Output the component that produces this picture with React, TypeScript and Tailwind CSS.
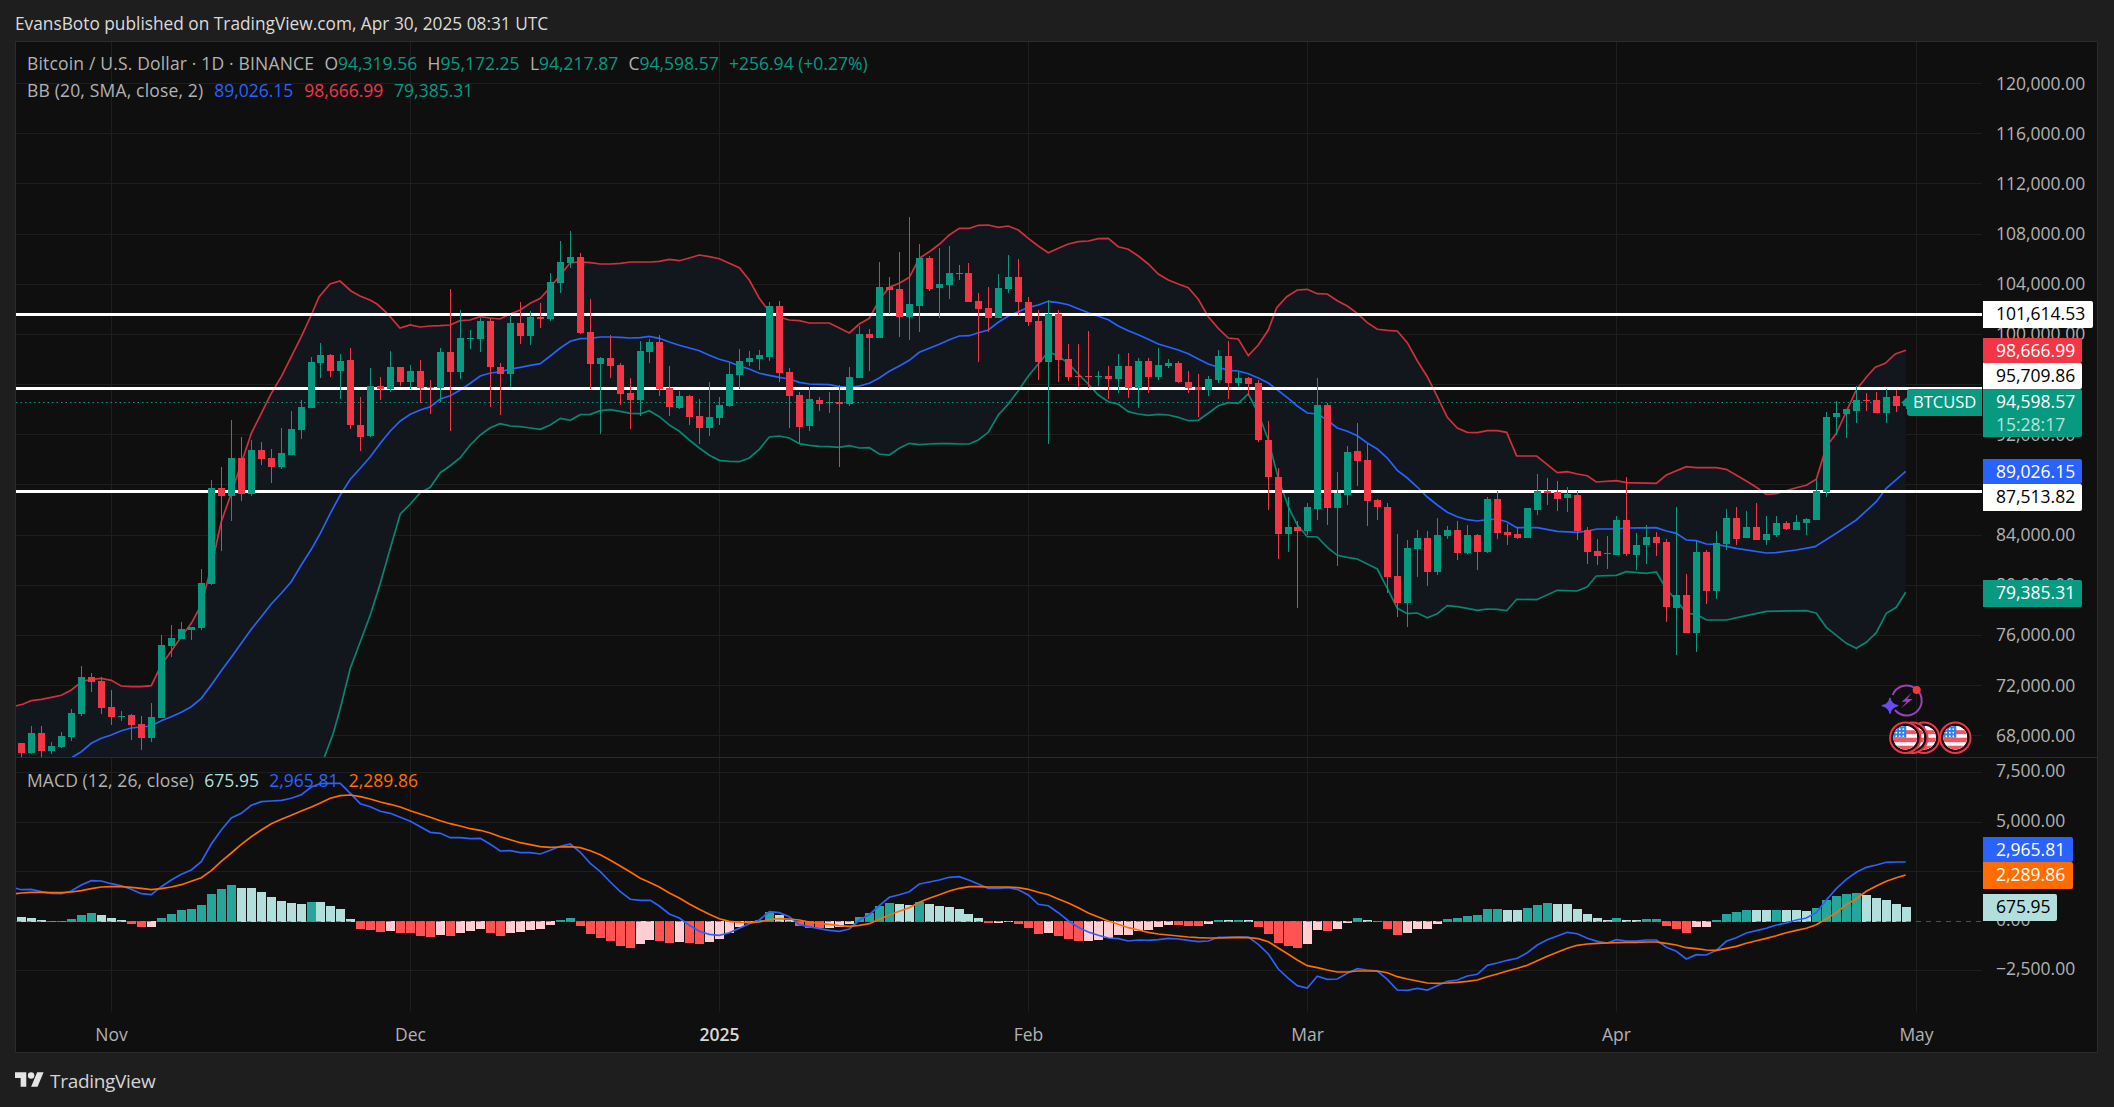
import React from "react";

type Pt = [number, number];
// hi, body top, body bottom, lo, 1 = up candle
type Row = [number, number, number, number, number];

const SKIPS = [31, 64, 96, 129, 161];
const barX = (i: number) => 21.5 + 10 * (i - 1) - SKIPS.filter((s) => s <= i).length;

// values read off 3x crops, so everything gets divided by 3 and shifted back
const crop = (ox: number, oy: number, flat: number[], s = 3): Pt[] => {
  const out: Pt[] = [];
  for (let i = 0; i < flat.length; i += 2) out.push([ox + flat[i] / s, oy + flat[i + 1] / s]);
  return out;
};
const line = (pts: Pt[]) => pts.map((p) => `${p[0].toFixed(1)},${p[1].toFixed(1)}`).join(" ");

const CANDLES_A: Row[] = [
  [1330,1330,1358,1370,0],[1278,1300,1358,1362,1],[1278,1300,1352,1370,0],[1326,1338,1352,1362,1],[1296,1308,1340,1343,1],
  [1228,1240,1310,1322,1],[1098,1132,1242,1247,1],[1120,1132,1145,1175,0],[1132,1144,1223,1242,0],[1170,1221,1250,1274,0],
  [1234,1248,1250,1262,1],[1243,1246,1274,1320,0],[1248,1273,1313,1350,0],[1210,1252,1313,1326,1],[1006,1036,1253,1253,1],
  [976,1015,1037,1070,1],[966,988,1017,1017,1],[980,982,990,1020,1],[808,850,984,990,1],[540,565,852,855,1],
  [502,565,587,752,0],[360,475,587,662,1],[412,475,581,602,0],[420,451,581,587,1],[427,451,476,495,0],
  [447,475,500,549,0],[384,460,500,506,1],[333,388,464,464,1],[300,322,389,416,1],[171,187,323,323,1],
  [129,166,188,234,1],[162,166,212,231,0],[162,184,212,297,1],[144,181,375,387,0],[291,376,411,453,0],
  [205,259,408,411,1],[231,259,266,300,0],[153,202,266,275,1],[201,202,245,258,0],[195,214,245,266,1],
  [180,214,264,310,0],[240,262,264,342,0],[144,157,264,305,1],[-33,157,215,393,0],[30,115,215,237,1],
  [90,114,117,147,1],[55,63,117,156,1],[55,63,201,320,0],[189,201,222,345,0],
];
const CANDLES_B: Row[] = [
  [345,369,522,561,1],[306,369,408,432,0],[333,351,408,435,1],[309,351,357,384,0],[220,246,357,363,1],
  [123,186,249,279,1],[93,171,190,204,1],[159,171,400,403,0],[297,396,492,567,0],[471,474,492,702,1],
  [405,474,498,534,0],[490,495,582,615,0],[534,579,600,687,0],[423,453,600,648,1],[418,426,456,489,1],
  [405,426,567,588,0],[498,564,621,648,0],[573,588,624,627,1],[585,588,651,675,0],[597,648,684,732,0],
  [546,651,684,708,1],[591,615,654,675,1],[489,522,618,621,1],[447,483,525,567,1],[453,474,486,498,1],
  [450,465,477,510,1],[306,318,471,483,1],[303,318,519,546,0],[504,516,588,684,0],[576,585,681,729,0],
  [561,597,678,693,1],[591,600,612,633,0],[576,606,608,639,1],[555,606,611,801,0],[501,531,612,618,1],
  [378,402,534,534,1],[387,402,414,513,0],[186,261,414,414,1],[231,261,270,342,0],[156,267,351,411,0],
  [51,312,351,420,1],[132,174,318,396,1],[168,174,267,273,0],[144,252,264,354,1],[138,219,255,297,1],
  [195,219,221,240,0],[189,219,306,306,0],[279,303,327,486,0],[261,324,354,396,0],[222,264,354,354,1],
];
const CANDLES_C: Row[] = [
  [165,231,267,279,1],[177,231,306,345,0],[291,306,366,378,0],[330,363,486,540,0],[300,342,486,732,1],
  [330,342,480,546,0],[432,477,531,543,0],[432,528,531,561,0],[393,528,531,564,0],[513,528,531,558,1],
  [498,528,537,597,0],[462,498,537,579,1],[459,498,564,594,0],[474,483,564,624,1],[474,483,531,579,0],
  [444,495,531,540,1],[477,489,498,504,1],[483,489,546,549,0],[513,546,564,579,0],[522,561,569,651,0],
  [528,537,570,588,1],[450,468,540,549,1],[423,468,549,597,0],[516,534,549,561,1],[531,534,552,585,0],
  [540,549,720,726,0],[663,720,831,930,0],[804,831,1002,1077,0],[891,981,1002,1056,1],[963,981,993,1224,0],
  [909,921,993,1005,1],[534,615,927,960,1],[609,615,924,975,0],[816,879,924,1098,1],[738,756,885,915,1],
  [669,753,783,858,0],[732,780,903,978,0],[897,900,921,960,0],[909,921,1131,1180,0],[1002,1128,1209,1251,0],
  [1020,1044,1209,1281,1],[990,1014,1047,1131,1],[993,1014,1116,1158,0],[954,1005,1116,1125,1],[978,990,1008,1017,1],
  [963,990,1059,1080,0],[975,1005,1059,1062,1],[1002,1005,1056,1110,0],[891,897,1056,1059,1],[873,897,999,1017,0],
];
const CANDLES_D: Row[] = [
  [432,456,465,495,0],[441,462,474,477,0],[384,384,474,474,1],[282,333,390,405,1],[294,333,339,375,0],
  [303,336,357,393,0],[321,342,354,396,1],[333,345,453,480,0],[441,450,516,552,0],[477,513,528,555,0],
  [468,519,522,567,1],[408,420,525,525,1],[291,420,522,528,0],[459,495,525,570,1],[435,471,495,552,1],
  [456,471,489,528,0],[477,486,681,726,0],[381,645,684,825,1],[582,645,759,759,0],[483,516,759,816,1],
  [510,516,633,672,0],[453,489,633,657,1],[387,414,492,510,1],[381,414,477,495,0],[393,441,474,474,1],
  [369,441,480,480,0],[408,462,480,495,1],[408,429,465,471,1],[423,429,447,450,0],[405,426,450,450,1],
  [414,417,429,465,1],[297,333,420,420,1],[96,111,336,351,1],[63,99,111,165,1],[87,87,102,174,1],
  [18,60,93,129,1],[39,60,63,93,0],[36,60,99,99,0],[27,51,99,129,1],[30,48,78,96,0],[58,66,78,86,1],
];

const toReal = (rows: Row[], oy: number) =>
  rows.map((r) => [oy + r[0] / 3, oy + r[1] / 3, oy + r[2] / 3, oy + r[3] / 3, r[4]] as Row);
const CANDLES: Row[] = [
  ...toReal(CANDLES_A, 300),
  ...toReal(CANDLES_B, 200),
  ...toReal(CANDLES_C, 200),
  ...toReal(CANDLES_D, 380),
];

const UPPER: Pt[] = [
  ...crop(0, 300, [47,1218,70,1212,94,1202,124,1198,154,1192,184,1186,214,1170,244,1146,274,1138,304,1135,334,1141,364,1158,394,1160,424,1160,454,1157,484,1095,514,1053,544,1010,574,970,604,915,634,800,664,665,694,580,724,490,754,400,784,340,814,280,844,230,874,170,904,110,934,45]),
  ...crop(0, 0, [319,297,330,284,340,281,351,291,360,296,370,300,377,304,387,313,400,328,410,325,420,327,430,326,440,325.7,450,325,460,320.7,470,320,480,316.7,490,318,500,319], 1),
  ...crop(500, 200, [31,342,61,330,91,310,121,295,151,262,181,225,211,188,241,186,271,188,301,192,331,192,361,190,391,186,421,186,451,186,478,184,508,178,538,182,568,174,598,165,628,170,658,176,688,190,718,203,748,240,778,295,808,335,838,352,868,360,898,362,928,369,958,369,988,369,1018,384,1048,399,1078,372,1108,355,1138,300,1168,262,1198,250,1228,232,1258,175,1288,155,1318,133,1348,105,1378,85,1408,85,1435,76,1465,75,1495,82]),
  ...crop(1000, 200, [25,78,55,90,85,115,115,138,145,158,175,145,205,132,235,125,265,123,295,116,325,115,355,140,385,148,415,168,445,192,475,222,505,240,535,252,565,263,595,298,625,350,655,385,685,414,715,417,745,467,775,435,805,390,830,323,860,290,892,270,922,268,952,281,982,282,1012,302,1042,318,1072,340,1102,368,1132,388,1162,391,1192,393,1222,428,1252,482,1282,530,1312,590,1342,652,1372,684,1402,697,1432,698,1462,692,1492,692]),
  ...crop(1500, 380, [20,157,50,228,110,228,172,278,202,275,232,282,262,287,289,306,349,302,379,308,469,310,499,285,559,260,589,263,649,263,679,268,739,303,769,322,799,343,829,341,889,323,919,316,949,298,979,200,1009,160,1039,95,1069,30]),
  ...crop(1700, 280, [500,290,526,262,556,250,586,222,618,211]),
];
const MIDDLE: Pt[] = [
  ...crop(0, 300, [217,1372,244,1355,274,1330,304,1315,334,1305,364,1292,394,1284,424,1281,454,1278,484,1262,514,1250,544,1237,574,1220,604,1195,634,1155,664,1112,694,1072,724,1030,754,988,784,950,814,912,844,880,874,845,904,795,934,748,961,700,991,640,1021,585,1051,538,1081,505,1111,470,1141,430,1171,393,1201,363,1231,343,1261,330,1291,320,1321,297,1351,287,1381,270,1411,250,1441,228,1471,219,1500,216]),
  ...crop(500, 200, [31,507,61,502,91,496,121,491,151,468,181,444,211,424,241,416,271,415,301,411,331,411,361,412,391,414,421,413,448,409,478,415,508,426,538,436,568,444,598,452,628,466,658,478,688,486,718,498,748,507,778,520,808,526,838,532,868,537,898,547,928,552,958,553,988,554,1018,560,1048,562,1078,558,1108,550,1138,534,1168,514,1198,498,1228,481,1258,457,1288,445,1318,433,1348,419,1378,408,1408,407,1435,398,1465,390,1495,367]),
  ...crop(1000, 200, [25,348,55,335,85,322,115,315,145,304,175,308,205,314,235,326,265,338,295,349,325,359,355,378,385,392,415,404,445,418,475,432,505,441,535,450,565,461,595,477,625,492,655,502,685,511,715,513,745,521,775,534,805,549,835,572,865,595,892,618,922,639,952,642,982,660,1012,684,1042,694,1072,707,1102,729,1132,747,1162,774,1192,811,1222,834,1252,861,1282,891,1312,915,1342,937,1372,950,1402,959,1432,963,1462,959,1492,957]),
  ...crop(1500, 380, [20,425,50,443,82,443,112,443,172,454,232,457,262,453,292,447,349,447,379,444,469,443,499,453,529,460,559,480,589,482,619,492,649,493,709,505,799,519,829,518,889,510,945,500,1009,460,1069,420,1129,365,1159,325,1217,274]),
];
const LOWER: Pt[] = [
  ...crop(0, 300, [973,1372,1000,1300,1021,1225,1051,1105,1081,1025,1111,945,1141,850,1171,745,1201,642,1231,612,1261,578,1291,562,1321,518,1351,497,1381,473,1411,435,1441,405,1471,383,1500,371]),
  ...crop(500, 200, [31,678,61,680,91,684,121,688,151,675,181,655,211,661,241,644,271,643,301,632,331,629,361,634,391,640,421,641,448,632,478,650,508,675,538,694,568,720,598,744,628,766,658,781,688,784,718,785,748,774,778,748,808,711,838,708,868,714,898,731,928,736,958,739,988,740,1018,742,1048,737,1078,744,1108,743,1138,762,1168,765,1198,745,1228,730,1258,734,1288,732,1318,731,1348,731,1378,732,1408,732,1435,720,1465,697,1495,645]),
  ...crop(1000, 200, [25,612,55,572,85,528,115,492,145,455,175,468,205,490,235,522,265,552,295,585,325,605,355,613,385,635,415,642,445,646,475,643,505,645,535,652,565,662,595,661,625,640,655,617,685,608,715,610,745,582,775,640,805,720,835,835,865,920,892,975,922,1010,952,1011,982,1042,1012,1066,1042,1072,1072,1077,1102,1092,1132,1107,1162,1165,1192,1225,1222,1241,1252,1239,1282,1253,1312,1241,1342,1217,1372,1220,1402,1225,1432,1231,1462,1227,1492,1228]),
  ...crop(1500, 380, [20,692,50,658,110,659,172,631,232,633,262,620,289,588,349,586,379,575,439,580,469,576,499,628,529,660,559,700,589,703,619,720,679,720,739,707,799,694,919,692,949,700,979,742,1039,790,1069,805,1099,787,1129,758,1159,700,1189,682,1217,637]),
];
const BAND_FILL: Pt[] = [...UPPER, ...[...LOWER].reverse(), [318, 790], [15, 790]];

const MACD_LINE: Pt[] = [
  ...crop(0, 780, [47,325,64,329,94,328,124,335,154,340,184,341,214,333,244,315,274,302,304,303,334,311,364,317,394,328,424,341,454,344,484,320,514,300,544,283,574,270,604,245,634,192,664,150,694,114,724,100,754,76,784,65,814,63,844,61,874,55,904,44,934,21,961,11,991,10,1021,10,1051,40,1081,71,1111,80,1141,94,1171,100,1201,112,1231,124,1261,140,1291,157,1321,160,1351,173,1381,173,1411,176,1441,175,1471,193,1501,213]),
  ...crop(500, 780, [31,212,61,218,91,218,121,222,151,211,181,199,211,192,241,217,271,250,301,275,331,306,361,335,391,358,421,361,451,361,478,378,508,402,538,414,568,436,598,454,628,463,658,466,688,458,718,445,748,431,778,420,808,395,838,398,868,410,898,434,928,440,958,446,988,451,1018,454,1048,447,1078,420,1108,404,1138,377,1168,352,1198,344,1228,335,1258,312,1288,306,1318,300,1348,292,1378,290,1408,301,1435,312,1465,325,1495,325]),
  ...crop(1000, 840, [25,143,55,149,85,165,115,193,145,197,175,218,205,242,235,262,265,276,295,286,325,294,355,296,385,303,415,300,445,301,475,299,505,295,535,297,565,301,595,305,625,303,655,292,685,292,715,291,745,291,775,313,805,342,835,387,865,415,892,437,922,444,952,409,982,418,1012,417,1042,400,1072,386,1102,390,1132,393,1162,418,1192,450,1222,451,1252,445,1282,450,1312,437,1342,424,1372,420,1402,408,1432,403]),
  ...crop(1480, 840, [22,376,52,369,82,361,112,355,142,338,172,315,202,299,232,288,262,277,292,281,322,295,352,304,382,309,409,299,439,303,469,303,499,300,529,300,559,322,589,334,619,357,649,344,679,345,709,331,739,304,769,293,799,279,829,272,859,265,889,255,919,249,949,240,979,234,1009,218,1039,180,1069,146,1099,118,1129,97,1159,82,1189,75,1219,67,1249,66,1277,66]),
];
const SIGNAL_LINE: Pt[] = [
  ...crop(0, 780, [47,341,64,339,94,337,124,337,154,338,184,338,214,336,244,332,274,326,304,321,334,320,364,320,394,322,424,325,454,329,484,326,514,321,544,314,574,304,604,293,634,272,664,244,694,219,724,193,754,170,784,150,814,131,844,118,874,106,904,93,934,81,961,69,991,55,1021,47,1051,45,1081,50,1111,57,1141,66,1171,73,1201,81,1231,92,1261,102,1291,112,1321,122,1351,131,1381,138,1411,146,1441,151,1471,159,1501,170]),
  ...crop(500, 780, [31,179,61,188,91,194,121,200,151,202,181,201,211,200,241,203,271,212,301,224,331,241,361,258,391,276,421,295,451,308,478,321,508,339,538,354,568,372,598,388,628,403,658,416,688,424,718,427,748,428,778,426,808,419,838,416,868,417,898,420,928,426,958,430,988,433,1018,437,1048,439,1078,436,1108,431,1138,418,1168,405,1198,394,1228,383,1258,367,1288,355,1318,344,1348,333,1378,325,1408,320,1435,320,1465,321,1495,321]),
  ...crop(1000, 840, [25,141,55,143,85,148,115,157,145,164,175,177,205,189,235,203,265,219,295,231,325,243,355,253,385,263,415,270,445,277,475,282,505,285,535,288,565,291,595,293,625,294,655,294,685,293,715,292,745,293,775,296,805,305,835,324,865,343,892,360,922,377,952,383,982,390,1012,396,1042,396,1072,393,1102,393,1132,393,1162,398,1192,410,1222,417,1252,423,1282,429,1312,430,1342,429,1372,427,1402,424,1432,420]),
  ...crop(1480, 840, [22,410,52,402,82,393,112,385,142,376,172,362,202,349,232,337,262,325,292,316,322,312,352,310,382,309,409,308,439,307,469,307,499,306,529,306,559,310,589,315,619,323,649,326,679,330,709,331,739,325,769,319,799,310,829,302,859,295,889,287,919,278,949,271,979,265,1009,254,1039,236,1069,218,1099,194,1129,176,1159,154,1189,138,1219,124,1249,113,1277,105]),
];

// histogram heights in crop px, T dark teal, L light teal, R red, P pink
const HIST: [number, string][] = [
  [22,"L"],[13,"L"],[10,"L"],[6,"L"],[-2,"R"],[-2,"R"],[8,"T"],[20,"T"],[26,"T"],[20,"L"],[11,"L"],[5,"L"],[-8,"R"],[-17,"R"],[-17,"P"],
  [11,"T"],[24,"T"],[35,"T"],[38,"T"],[50,"T"],[82,"T"],[97,"T"],[110,"T"],[101,"L"],[101,"L"],[89,"L"],[73,"L"],[61,"L"],[55,"L"],[52,"L"],
  [58,"T"],[58,"L"],[46,"L"],[37,"L"],[7,"L"],[-23,"R"],[-26,"R"],[-32,"R"],[-29,"P"],[-35,"R"],[-35,"R"],[-44,"R"],[-47,"R"],[-41,"P"],[-44,"R"],
  [-35,"P"],[-29,"P"],[-23,"P"],[-35,"R"],[-44,"R"],[-35,"P"],[-32,"P"],[-26,"P"],[-23,"P"],[-11,"P"],[4,"T"],[10,"T"],[-14,"R"],[-38,"R"],[-50,"R"],
  [-59,"R"],[-74,"R"],[-80,"R"],[-68,"P"],[-56,"P"],[-59,"R"],[-65,"R"],[-62,"P"],[-65,"R"],[-68,"R"],[-62,"P"],[-53,"P"],[-35,"P"],[-17,"P"],[-6,"P"],
  [6,"T"],[28,"T"],[20,"L"],[6,"L"],[-14,"R"],[-20,"R"],[-20,"R"],[-20,"P"],[-16,"P"],[-8,"P"],[14,"T"],[25,"T"],[47,"T"],[56,"T"],[53,"L"],
  [50,"L"],[59,"T"],[53,"L"],[47,"L"],[44,"L"],[38,"L"],[23,"L"],[11,"L"],[-4,"R"],[-4,"P"],[-3,"P"],[-7,"R"],[-20,"R"],[-38,"R"],[-35,"P"],
  [-44,"R"],[-53,"R"],[-59,"R"],[-59,"P"],[-56,"P"],[-50,"P"],[-41,"P"],[-41,"P"],[-29,"P"],[-26,"P"],[-17,"P"],[-11,"P"],[-11,"R"],[-14,"R"],[-14,"R"],
  [-8,"P"],[5,"T"],[4,"L"],[5,"T"],[4,"L"],[-17,"R"],[-38,"R"],[-65,"R"],[-74,"R"],[-80,"R"],[-68,"P"],[-26,"P"],[-29,"R"],[-23,"P"],[-4,"P"],
  [10,"T"],[5,"L"],[-2,"R"],[-23,"R"],[-41,"R"],[-35,"P"],[-23,"P"],[-23,"P"],[-8,"P"],[7,"T"],[10,"T"],[16,"T"],[19,"T"],[37,"T"],[37,"T"],
  [34,"L"],[34,"L"],[40,"T"],[49,"T"],[55,"T"],[52,"L"],[52,"L"],[37,"L"],[22,"L"],[10,"L"],[5,"L"],[10,"T"],[4,"L"],[4,"L"],[7,"T"],
  [7,"T"],[-14,"R"],[-23,"R"],[-35,"R"],[-17,"P"],[-17,"P"],[5,"T"],[22,"T"],[28,"T"],[34,"T"],[34,"L"],[34,"L"],[34,"T"],[34,"L"],[34,"L"],
  [31,"L"],[40,"T"],[64,"T"],[76,"T"],[82,"T"],[85,"T"],[79,"L"],[70,"L"],[64,"L"],[52,"L"],[43,"L"],
];
const HIST_COLOR: Record<string, string> = { T: "#26a69a", L: "#b2dfdb", R: "#ff5252", P: "#ffcdd2" };

const MONTHS: [string, number][] = [["Nov", 111.5], ["Dec", 410.5], ["2025", 719.5], ["Feb", 1028.5], ["Mar", 1307.5], ["Apr", 1616.5], ["May", 1916.5]];
const H_GRID = Array.from({ length: 14 }, (_, i) => 83.5 + 50.17 * i);
const TICKS = ["120,000.00","116,000.00","112,000.00","108,000.00","104,000.00","100,000.00","96,000.00","92,000.00","88,000.00","84,000.00","80,000.00","76,000.00","72,000.00","68,000.00"];
const MACD_TICKS: [string, number][] = [["7,500.00", 771], ["5,000.00", 821], ["2,500.00", 870], ["0.00", 920], ["−2,500.00", 969]];

type Tag = { text: string; sub?: string; top: number; h: number; w: number; cls: string };
const PRICE_TAGS: Tag[] = [
  { text: "101,614.53", top: 301, h: 27, w: 110, cls: "bg-white text-black" },
  { text: "98,666.99", top: 338, h: 25, w: 99, cls: "bg-[#f23645] text-white" },
  { text: "95,709.86", top: 363, h: 26, w: 99, cls: "bg-white text-black" },
  { text: "94,598.57", sub: "15:28:17", top: 389, h: 48, w: 99, cls: "bg-[#089981] text-white" },
  { text: "89,026.15", top: 459, h: 25, w: 99, cls: "bg-[#2962ff] text-white" },
  { text: "87,513.82", top: 484, h: 27, w: 99, cls: "bg-white text-black" },
  { text: "79,385.31", top: 580, h: 27, w: 99, cls: "bg-[#089981] text-white" },
];
const MACD_TAGS: Tag[] = [
  { text: "2,965.81", top: 837, h: 25, w: 90, cls: "bg-[#2962ff] text-white" },
  { text: "2,289.86", top: 862, h: 27, w: 90, cls: "bg-[#ff6d00] text-white" },
  { text: "675.95", top: 894, h: 27, w: 74, cls: "bg-[#b2dfdb] text-black" },
];

function FlagCoin({ cx, id }: { cx: number; id: string }) {
  const cy = 737.7;
  return (
    <g>
      <circle cx={cx} cy={cy} r={15.2} fill="#0f0f0f" stroke="#f23645" strokeWidth={2} />
      <circle cx={cx} cy={cy} r={12.6} fill="#ffffff" stroke="#141414" strokeWidth={1.6} />
      <clipPath id={id}>
        <circle cx={cx} cy={cy} r={11.8} />
      </clipPath>
      <g clipPath={`url(#${id})`}>
        <rect x={cx - 12} y={cy - 12} width={24} height={24} fill="#ffffff" />
        <rect x={cx - 12} y={cy - 7.5} width={24} height={4} fill="#f7525f" />
        <rect x={cx - 12} y={cy} width={24} height={4.5} fill="#f7525f" />
        <rect x={cx - 12} y={cy + 8} width={24} height={4} fill="#f7525f" />
        <rect x={cx - 12} y={cy - 12} width={13} height={12} fill="#2f80ed" />
        {[-9, -5.5, -2].map((dx) =>
          [-8.5, -5, -1.5].map((dy) => (
            <circle key={`${dx}${dy}`} cx={cx + dx} cy={cy + dy} r={0.9} fill="#ffffff" />
          )),
        )}
      </g>
    </g>
  );
}

function MainPane() {
  return (
    <svg viewBox="16 42 1966 715" className="absolute inset-0 h-[715px] w-[1966px]">
      {H_GRID.map((y) => (
        <line key={y} x1={16} x2={1982} y1={y} y2={y} stroke="#1e1e1e" shapeRendering="crispEdges" />
      ))}
      {MONTHS.map(([m, x]) => (
        <line key={m} x1={x} x2={x} y1={42} y2={757} stroke="#1e1e1e" shapeRendering="crispEdges" />
      ))}
      <polygon points={line(BAND_FILL)} fill="#11171c" />
      <polyline points={line(UPPER)} fill="none" stroke="#f23645" strokeWidth={1.7} opacity={0.85} />
      <polyline points={line(MIDDLE)} fill="none" stroke="#2962ff" strokeWidth={1.7} />
      <polyline points={line(LOWER)} fill="none" stroke="#089981" strokeWidth={1.7} opacity={0.85} />
      {[314.5, 388.5, 491.5].map((y) => (
        <rect key={y} x={16} width={1966} y={y - 1.5} height={3} fill="#ffffff" />
      ))}
      <line x1={16} x2={1907} y1={402.5} y2={402.5} stroke="#089981" strokeDasharray="1.5 3" />
      {CANDLES.map((c, i) => {
        const x = barX(i + 1);
        const color = c[4] ? "#089981" : "#f23645";
        return (
          <g key={i} shapeRendering="crispEdges" fill={color}>
            <rect x={x - 0.5} width={1} y={c[0]} height={Math.max(c[3] - c[0], 1)} />
            <rect x={x - 3.5} width={7} y={c[1]} height={Math.max(c[2] - c[1], 1)} />
          </g>
        );
      })}
      {/* news / earnings markers */}
      <path d="M1892.7 695A15 15 0 1 1 1895 710" fill="none" stroke="#9c40b8" strokeWidth={2} />
      <path d="M1911.7 692.7L1901.7 701.7H1906.7L1901 708.3L1912.7 699H1907.3Z" fill="#9c40b8" />
      <path d="M1890 698q1.2 6.3 7.8 7.7q-6.6 1.4-7.8 7.7q-1.2-6.3-7.8-7.7q6.6-1.4 7.8-7.7z" fill="#6a4cf5" stroke="#6a4cf5" strokeWidth={1.2} strokeLinejoin="round" />
      <circle cx={1916.7} cy={690} r={4} fill="#f23645" />
      <FlagCoin cx={1924} id="coin-a" />
      <FlagCoin cx={1912.3} id="coin-b" />
      <FlagCoin cx={1905.3} id="coin-c" />
      <FlagCoin cx={1955.3} id="coin-d" />
    </svg>
  );
}

function MacdPane() {
  return (
    <svg viewBox="16 758 1966 254" className="absolute inset-0 h-[254px] w-[1966px]">
      {[772.5, 822.5, 871.5, 970.5].map((y) => (
        <line key={y} x1={16} x2={1982} y1={y} y2={y} stroke="#1e1e1e" shapeRendering="crispEdges" />
      ))}
      {MONTHS.map(([m, x]) => (
        <line key={m} x1={x} x2={x} y1={758} y2={1012} stroke="#1e1e1e" shapeRendering="crispEdges" />
      ))}
      {HIST.map(([h, c], i) => {
        const x = barX(i);
        const hPx = Math.abs(h) / 3;
        return (
          <rect
            key={i}
            x={x - 4.5}
            width={9}
            y={h > 0 ? 921.7 - hPx : 921.3}
            height={hPx}
            fill={HIST_COLOR[c]}
            shapeRendering="crispEdges"
          />
        );
      })}
      <line x1={16} x2={1982} y1={921.5} y2={921.5} stroke="#6b6b6b" strokeDasharray="5 5" opacity={0.7} />
      <polyline points={line(MACD_LINE)} fill="none" stroke="#2962ff" strokeWidth={1.7} />
      <polyline points={line(SIGNAL_LINE)} fill="none" stroke="#ff6d00" strokeWidth={1.7} />
    </svg>
  );
}

function AxisTag({ tag, offset }: { tag: Tag; offset: number }) {
  return (
    <div
      className={`absolute left-px rounded-r-[2px] pl-[13px] ${tag.cls}`}
      style={{ top: tag.top - offset, height: tag.h, width: tag.w }}
    >
      <div className="leading-[25px]">{tag.text}</div>
      {tag.sub && <div className="leading-[21px] text-[#b7e3da]">{tag.sub}</div>}
    </div>
  );
}

function TickLabel({ text, y, offset }: { text: string; y: number; offset: number }) {
  return (
    <div
      className="absolute left-[14px] -translate-y-1/2 leading-none text-[#b2b2b2]"
      style={{ top: y - offset }}
    >
      {text}
    </div>
  );
}

export default function App() {
  return (
    <div className="flex h-[1107px] w-[2114px] flex-col overflow-hidden bg-[#1e1e1e] font-['Open_Sans',sans-serif] text-[17.5px] text-[#d0d0d0]">
      <header className="flex h-[41px] items-center pl-[15px] pt-[6px] text-[17.3px] text-[#dadada]">
        EvansBoto published on TradingView.com, Apr 30, 2025 08:31 UTC
      </header>

      <div className="ml-[15px] grid h-[1012px] w-[2083px] grid-cols-[1966px_115px] grid-rows-[716px_254px_40px] border border-[#2b2b2b] bg-[#0f0f0f]">
        <div className="relative overflow-hidden border-b border-[#2b2b2b]">
          <MainPane />
          <div className="absolute left-[11px] top-[10px] flex flex-col text-[#b2b2b2]">
            <div className="flex h-[22px] items-center gap-[10.3px]">
              <span className="tracking-[0.17px]">Bitcoin / U.S. Dollar · 1D · BINANCE</span>
              <span className="text-[#089981]"><span className="text-[#b2b2b2]">O</span>94,319.56</span>
              <span className="text-[#089981]"><span className="text-[#b2b2b2]">H</span>95,172.25</span>
              <span className="text-[#089981]"><span className="text-[#b2b2b2]">L</span>94,217.87</span>
              <span className="text-[#089981]"><span className="text-[#b2b2b2]">C</span>94,598.57</span>
              <span className="text-[#089981]">+256.94 (+0.27%)</span>
            </div>
            <div className="mt-[5px] flex h-[22px] items-center gap-[10.8px]">
              <span className="tracking-[0.17px]">BB (20, SMA, close, 2)</span>
              <span className="text-[#2962ff]">89,026.15</span>
              <span className="text-[#f23645]">98,666.99</span>
              <span className="text-[#089981]">79,385.31</span>
            </div>
          </div>
          <div className="absolute left-[1887px] top-[347px] flex h-[27px] w-[79px] items-center">
            <div className="h-[7px] w-[7px] shrink-0 rotate-45 bg-[#089981]" />
            <div className="-ml-[3px] flex h-[27px] flex-1 items-center rounded-l-[3px] bg-[#089981] pl-[6px] text-[16.5px] text-white">
              BTCUSD
            </div>
          </div>
        </div>

        <div className="relative overflow-hidden border-b border-[#2b2b2b]">
          {TICKS.map((t, i) => (
            <TickLabel key={t} text={t} y={H_GRID[i]} offset={42} />
          ))}
          {PRICE_TAGS.map((t) => (
            <AxisTag key={t.text} tag={t} offset={42} />
          ))}
        </div>

        <div className="relative overflow-hidden">
          <MacdPane />
          <div className="absolute left-[11px] top-[11px] flex h-[22px] items-center gap-[10.3px] text-[#b2b2b2]">
            <span className="tracking-[0.1px]">MACD (12, 26, close)</span>
            <span className="text-[#b2dfdb]">675.95</span>
            <span className="text-[#2962ff]">2,965.81</span>
            <span className="text-[#ff6d00]">2,289.86</span>
          </div>
        </div>

        <div className="relative overflow-hidden">
          {MACD_TICKS.map(([t, y]) => (
            <TickLabel key={t} text={t} y={y} offset={758} />
          ))}
          {MACD_TAGS.map((t) => (
            <AxisTag key={t.text} tag={t} offset={758} />
          ))}
        </div>

        <div className="relative col-span-2">
          {MONTHS.map(([m, x]) => (
            <span
              key={m}
              className={`absolute top-[11px] -translate-x-1/2 leading-[22px] ${m === "2025" ? "font-semibold text-[#d8d8d8]" : "text-[#b2b2b2]"}`}
              style={{ left: x - 16 }}
            >
              {m}
            </span>
          ))}
        </div>
      </div>

      <footer className="flex flex-1 items-center gap-[6px] pl-[15px] pb-[2px] text-[#d4d4d4]">
        <svg viewBox="0 4 36 18" className="h-[15px] w-[29px]" fill="#e4e4e4">
          <path d="M14 22H7V11H0V4h14v18zM28 22h-8l7.5-18h8L28 22z" />
          <circle cx="20" cy="8" r="4" />
        </svg>
        <span className="mt-[4px] text-[19px] font-medium tracking-[-0.3px]">TradingView</span>
      </footer>
    </div>
  );
}
